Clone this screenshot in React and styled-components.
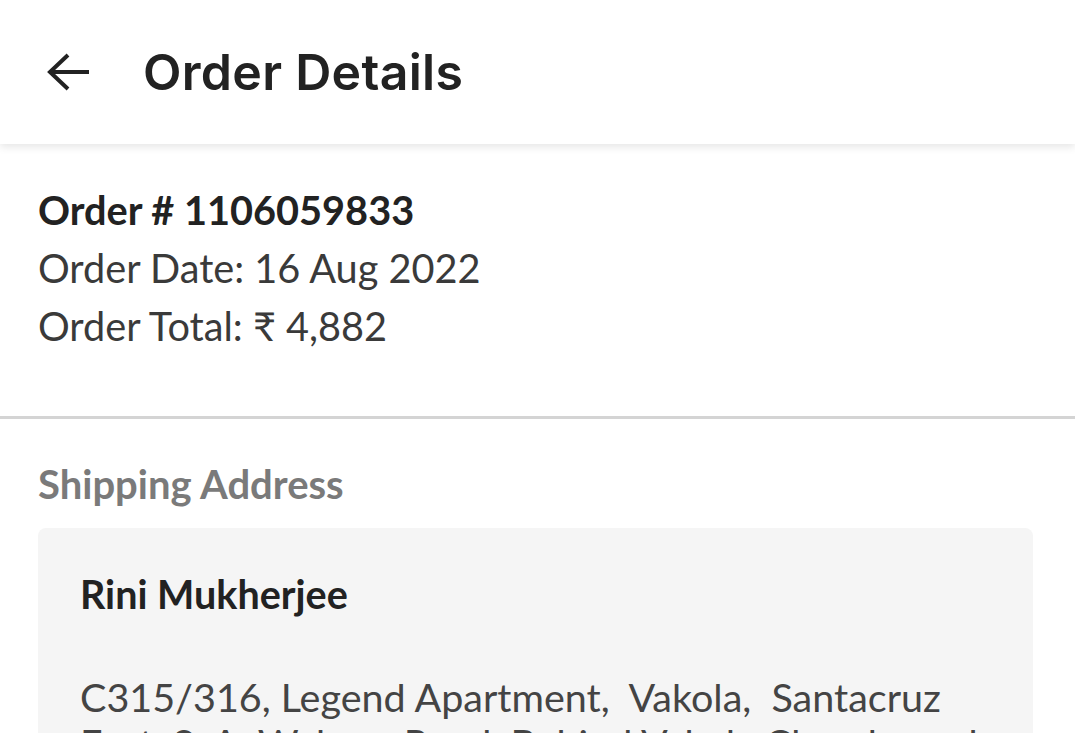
import React from 'react'
import styled, { createGlobalStyle } from 'styled-components'

const GlobalStyle = createGlobalStyle`
  body {
    margin: 0;
    background: #ffffff;
    font-family: Lato, "Noto Sans", sans-serif;
    color: #222222;
  }
`

const Page = styled.div`
  width: 100%;
  height: 733px;
  overflow: hidden;
`

const Header = styled.header`
  height: 144px;
  display: flex;
  align-items: center;
  padding-left: 46px;
  gap: 53px;
  background: #ffffff;
  box-shadow: 0 3px 8px rgba(0, 0, 0, 0.1);
  position: relative;
  z-index: 1;
`

const BackButton = styled.button`
  border: 0;
  background: none;
  padding: 0;
  width: 44px;
  height: 44px;
  display: flex;
  align-items: center;
  justify-content: center;
  cursor: pointer;
  color: #222222;
`

const Title = styled.h1`
  margin: 0;
  font-family: Inter, "Noto Sans", sans-serif;
  font-weight: 600;
  font-size: 50px;
  letter-spacing: 0.3px;
  color: #222222;
`

const Summary = styled.section`
  padding: 37px 38px 0;
  height: 235px;
  box-sizing: border-box;
`

const Line = styled.div`
  font-size: 39.7px;
  line-height: 58px;
  font-weight: ${p => (p.bold ? 700 : 400)};
  color: ${p => (p.bold ? '#222222' : '#3a3a3a')};
`

const Divider = styled.hr`
  margin: 37px 0 0;
  border: 0;
  height: 3px;
  background: #d4d4d4;
`

const Shipping = styled.section`
  padding: 38px 42px 0 38px;
`

const Label = styled.h2`
  margin: 0;
  font-size: 40px;
  line-height: 54px;
  font-weight: 700;
  color: #7a7a7a;
`

const Card = styled.div`
  margin-top: 17px;
  background: #f5f5f5;
  border-radius: 8px;
  padding: 40px 42px;
`

const Name = styled.div`
  font-size: 39.5px;
  line-height: 52px;
  font-weight: 700;
  color: #222222;
`

const Address = styled.div`
  margin-top: 54px;
  font-size: 39.5px;
  line-height: 46px;
  color: #444444;
  white-space: pre-wrap;
`

const ArrowLeft = () => (
  <svg width="44" height="44" viewBox="0 0 44 44" fill="none" stroke="currentColor" strokeWidth="4" strokeLinecap="square">
    <path d="M41 22H5" />
    <path d="M22 5L4 22l18 17" strokeLinecap="butt" />
  </svg>
)

export default function App() {
  return (
    <>
      <GlobalStyle />
      <Page>
        <Header>
          <BackButton aria-label="Back">
            <ArrowLeft />
          </BackButton>
          <Title>Order Details</Title>
        </Header>

        <Summary>
          <Line bold>Order # 1106059833</Line>
          <Line>Order Date: 16 Aug 2022</Line>
          <Line>Order Total: ₹ 4,882</Line>
        </Summary>
        <Divider />

        <Shipping>
          <Label>Shipping Address</Label>
          <Card>
            <Name>Rini Mukherjee</Name>
            <Address>{'C315/316, Legend Apartment,  Vakola,  Santacruz\nEast, S. A. Waharo Road, Behind Vakola Church road'}</Address>
          </Card>
        </Shipping>
      </Page>
    </>
  )
}
